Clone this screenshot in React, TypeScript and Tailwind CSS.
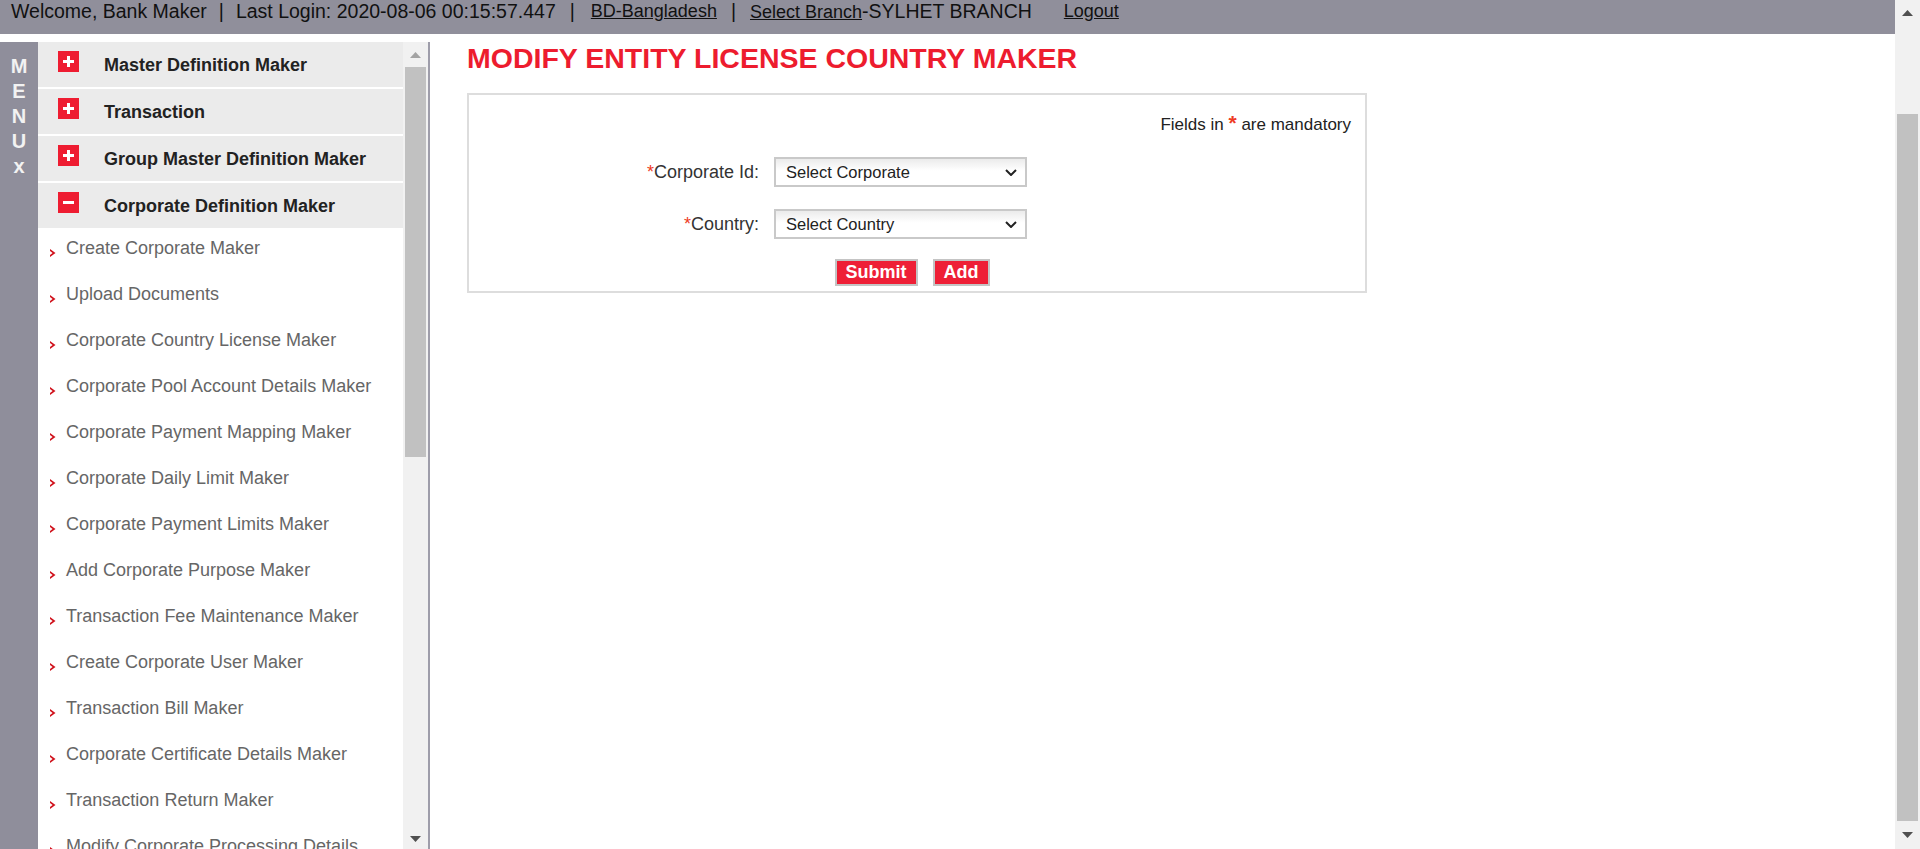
import React from "react";

const headers = [
  { label: "Master Definition Maker", open: false },
  { label: "Transaction", open: false },
  { label: "Group Master Definition Maker", open: false },
  { label: "Corporate Definition Maker", open: true },
];

const subItems = [
  "Create Corporate Maker",
  "Upload Documents",
  "Corporate Country License Maker",
  "Corporate Pool Account Details Maker",
  "Corporate Payment Mapping Maker",
  "Corporate Daily Limit Maker",
  "Corporate Payment Limits Maker",
  "Add Corporate Purpose Maker",
  "Transaction Fee Maintenance Maker",
  "Create Corporate User Maker",
  "Transaction Bill Maker",
  "Corporate Certificate Details Maker",
  "Transaction Return Maker",
  "Modify Corporate Processing Details",
  "Corporate Account Maker",
];

const Arrow: React.FC<{ up?: boolean; color: string }> = ({ up, color }) => (
  <svg width="11" height="6" viewBox="0 0 11 6">
    <polygon points={up ? "0,6 5.5,0 11,6" : "0,0 5.5,6 11,0"} fill={color} />
  </svg>
);

const Bullet = () => (
  <svg className="mt-[13px] mr-[10px] shrink-0" width="6" height="8" viewBox="0 0 6 8">
    <polygon points="0,0 5.5,4 0,8 0,6 2.6,4 0,2" fill="#d0121c" />
  </svg>
);

const ToggleIcon: React.FC<{ open: boolean }> = ({ open }) => (
  <span className="mt-[9px] ml-5 flex h-[21px] w-[21px] shrink-0 items-center justify-center bg-[#ee1c31]">
    <svg width="11" height="11" viewBox="0 0 11 11">
      <rect x="0" y="4" width="11" height="3" fill="#fff" />
      {!open && <rect x="4" y="0" width="3" height="11" fill="#fff" />}
    </svg>
  </span>
);

const Select: React.FC<{ text: string }> = ({ text }) => (
  <div className="flex h-[30px] w-[253px] items-center justify-between border-2 border-[#c9c9c9] bg-[linear-gradient(to_bottom,#ebebeb,#ffffff_45%)] pl-[10px] pr-[8px] text-[16.5px] text-[#222]">
    <span>{text}</span>
    <svg width="12" height="7" viewBox="0 0 12 7">
      <path d="M1 1 L6 6 L11 1" fill="none" stroke="#222" strokeWidth="2" />
    </svg>
  </div>
);

const App: React.FC = () => {
  return (
    <div className="flex h-[849px] w-full overflow-hidden bg-white font-['Liberation_Sans',Arial,sans-serif]">
      <div className="flex min-w-0 flex-1 flex-col">
        {/* top bar */}
        <div className="flex h-[34px] shrink-0 items-start whitespace-nowrap bg-[#908f9b] pl-[11px] text-[19.5px] leading-[22px] text-[#111]">
          <span>Welcome, Bank Maker</span>
          <span className="mx-[12px]">|</span>
          <span>Last Login: 2020-08-06 00:15:57.447</span>
          <span className="ml-[14px] mr-[16px]">|</span>
          <span className="text-[18px] underline">BD-Bangladesh</span>
          <span className="mx-[14px]">|</span>
          <span>
            <span className="text-[18px] underline">Select Branch</span>-SYLHET BRANCH
          </span>
          <span className="ml-8 text-[18px] underline">Logout</span>
        </div>

        <div className="mt-2 flex min-h-0 flex-1">
          {/* sidebar */}
          <aside className="flex w-[430px] shrink-0">
            <div className="flex w-[38px] flex-col items-center bg-[#8f8e9b] pt-3 text-[20px] font-bold leading-[25px] text-[#f2f2f2]">
              <span>M</span>
              <span>E</span>
              <span>N</span>
              <span>U</span>
              <span>x</span>
            </div>
            <div className="w-[365px] overflow-hidden">
              {headers.map((h) => (
                <div
                  key={h.label}
                  className="flex h-[47px] items-start border-b-2 border-white bg-[#ebebeb]"
                >
                  <ToggleIcon open={h.open} />
                  <span className="ml-[25px] mt-px text-[18px] font-bold leading-[44px] text-[#222]">
                    {h.label}
                  </span>
                </div>
              ))}
              {subItems.map((s) => (
                <div key={s} className="flex h-[46px] items-start whitespace-nowrap pl-3 pt-[6px]">
                  <Bullet />
                  <span className="text-[18px] leading-6 text-[#666]">{s}</span>
                </div>
              ))}
            </div>
            {/* sidebar scrollbar */}
            <div className="flex w-[25px] flex-col bg-[#f1f1f1]">
              <div className="flex h-[25px] items-center justify-center">
                <Arrow up color="#a3a3a3" />
              </div>
              <div className="ml-[2px] h-[390px] w-[21px] bg-[#c1c1c1]" />
              <div className="mt-auto flex h-[20px] items-center justify-center">
                <Arrow color="#505050" />
              </div>
            </div>
            <div className="w-[2px] bg-[#9e9daa]" />
          </aside>

          {/* content */}
          <main className="min-w-0 flex-1 pl-[37px]">
            <h1 className="text-[28.5px] font-bold leading-8 text-[#ed1c2e]">
              MODIFY ENTITY LICENSE COUNTRY MAKER
            </h1>
            <div className="mt-[19px] h-[200px] w-[900px] border-2 border-[#dddddd]">
              <div className="pr-[14px] pt-[17px] text-right text-[17px] leading-5 text-[#222]">
                Fields in <span className="text-[21px] font-bold leading-none text-[#ee3b24]">*</span> are mandatory
              </div>
              <div className="mt-[22px] grid grid-cols-[290px_253px] items-center gap-x-[15px] gap-y-[22px]">
                <label className="text-right text-[18px] text-[#333]">
                  <span className="text-[#ee3b24]">*</span>Corporate Id:
                </label>
                <Select text="Select Corporate" />
                <label className="text-right text-[18px] text-[#333]">
                  <span className="text-[#ee3b24]">*</span>Country:
                </label>
                <Select text="Select Country" />
              </div>
              <div className="mt-[20px] flex justify-center gap-[15px] pr-[10px]">
                <button className="h-[27px] border-2 border-[#c4c4c4] bg-[#ee1f36] px-[9px] text-[18px] font-bold leading-[23px] text-white">
                  Submit
                </button>
                <button className="h-[27px] border-2 border-[#c4c4c4] bg-[#ee1f36] px-[9px] text-[18px] font-bold leading-[23px] text-white">
                  Add
                </button>
              </div>
            </div>
          </main>
        </div>
      </div>

      {/* page scrollbar */}
      <div className="flex w-[25px] shrink-0 flex-col bg-[#f1f1f1]">
        <div className="flex h-[25px] items-center justify-center">
          <Arrow up color="#505050" />
        </div>
        <div className="ml-[2px] mt-[89px] h-[707px] w-[21px] bg-[#c1c1c1]" />
        <div className="mt-auto flex h-[28px] items-center justify-center">
          <Arrow color="#505050" />
        </div>
      </div>
    </div>
  );
};

export default App;
